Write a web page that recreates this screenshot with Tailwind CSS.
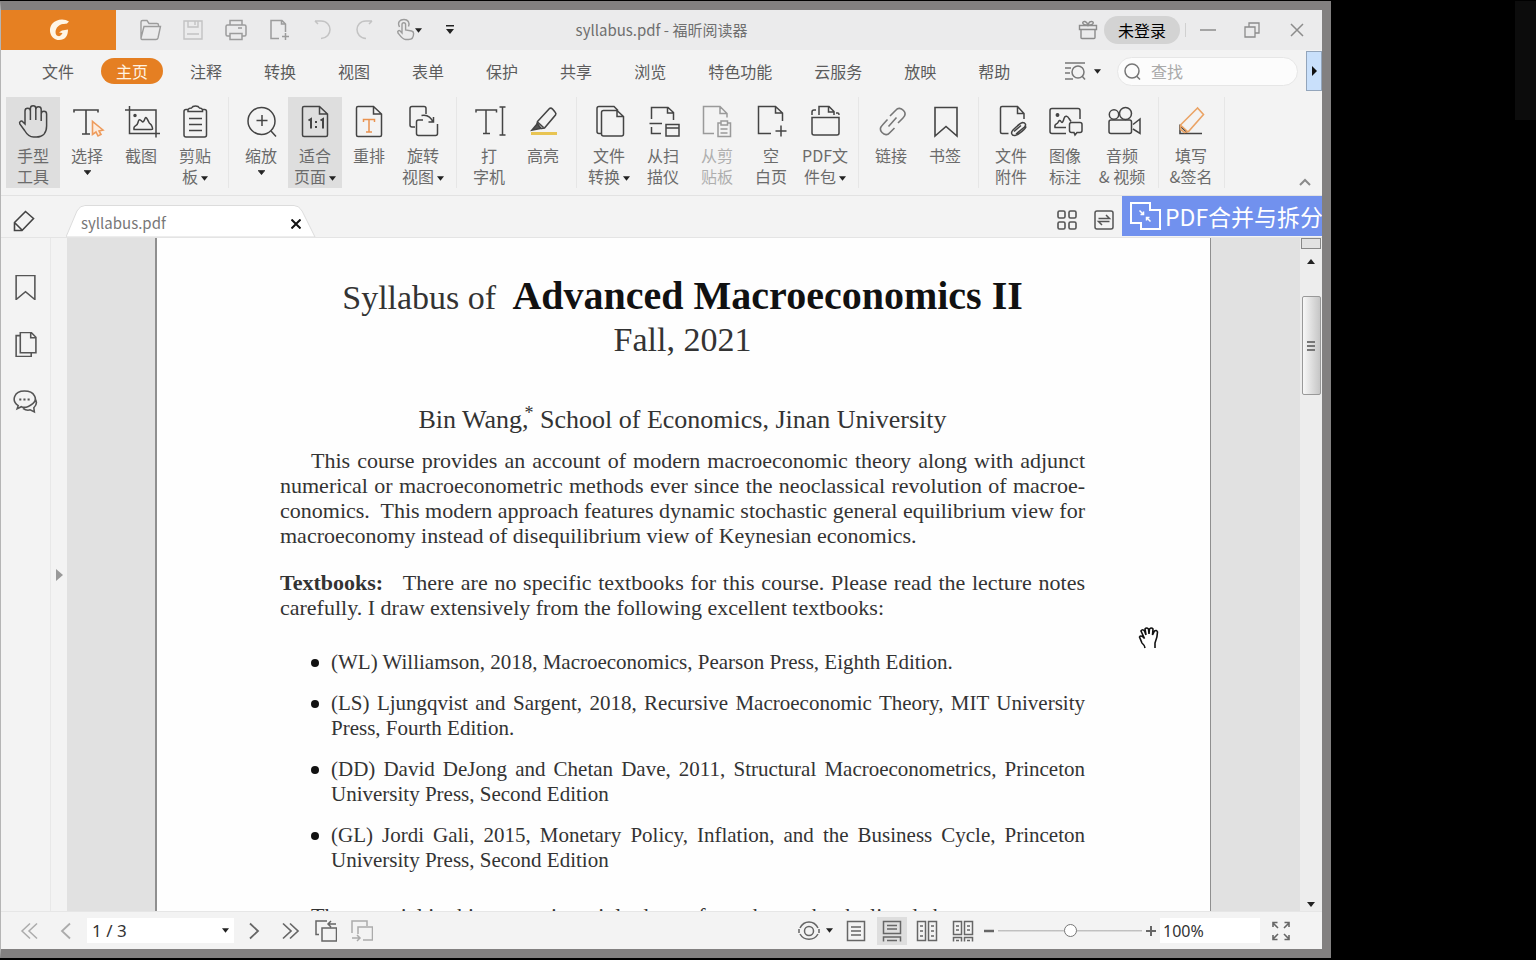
<!DOCTYPE html>
<html lang="zh-CN">
<head>
<meta charset="utf-8">
<title>syllabus.pdf - 福昕阅读器</title>
<script src="https://cdn.jsdelivr.net/npm/@tailwindcss/browser@4"></script>
</head>
<body class="flex h-screen overflow-hidden bg-black pt-px pb-[2px] font-['Noto_Sans_CJK_SC',sans-serif] text-base text-[#5c5c5c]">
<svg class="hidden">
  <symbol id="caret" viewBox="0 0 8 5"><path d="M0 0h8L4 5z" fill="#222"/></symbol>
</svg>

<div class="flex min-w-0 flex-1 flex-col border-t-[9px] border-r-[9px] border-b-[9px] border-l border-[#828080] border-l-[#b5b5b5] bg-[#f3f3f3]">

  <!-- Title bar -->
  <header class="grid h-10 shrink-0 grid-cols-[1fr_auto_1fr] items-center bg-[#ebebec]">
    <div class="flex h-10 items-center">
      <button aria-label="福昕" class="flex h-10 w-[115px] items-center justify-center bg-[#e68022]">
        <svg class="size-6" viewBox="0 0 24 24"><path d="M22 3.500C17 0 9 1 5 6c-4.500 6-1 16 7 16 6 0 9-4 9-10.500l-6 1-3 2 3.500.5c-1 2.500-3 3.500-4.500 3-3.500-1-3-7 0-9.500C14 5.500 18 6 20 5.500z" fill="#fff6e6"/></svg>
      </button>
      <div class="ml-3 flex items-center [&>button]:flex [&>button]:h-8 [&>button]:w-[43px] [&>button]:items-center [&>button]:justify-center [&_svg]:size-6 [&_svg]:shrink-0 [&_svg]:fill-none [&_svg]:stroke-[#9c9c9c]">
        <button aria-label="打开"><svg viewBox="0 0 24 24" stroke-width="1.4"><path d="M3 20V4q0-1.500 1.500-1.500H9l2 3h8q1.500 0 1.500 1.500v1.500M3 20l3-11.500h16.500L20 20q-.5 1.500-2 1.500H4q-1 0-1-1.500z"/></svg></button>
        <button aria-label="保存" class="opacity-50"><svg viewBox="0 0 24 24" stroke-width="1.4"><path d="M3 3h18v18H3zM7 3v6h10V3M14 3v4M6 16h12"/></svg></button>
        <button aria-label="打印"><svg viewBox="0 0 24 24" stroke-width="1.5"><path d="M6 7V2.500h12V7M6 18H3.500q-1.500 0-1.500-1.500v-8Q2 7 3.500 7h17Q22 7 22 8.500v8q0 1.500-1.500 1.500H18M6 15.500h12v6H6zM14 10h4"/></svg></button>
        <button aria-label="新建"><svg viewBox="0 0 24 24" stroke-width="1.5"><path d="M12 20.500H4v-18h11l3.500 3.500v8M14.500 2.500V6h4M18.500 15v7M15 18.500h7"/></svg></button>
        <button aria-label="撤销" class="opacity-50"><svg viewBox="0 0 24 24" stroke-width="1.5"><path d="M5 3h6c12 0 12 17 0 17.500M5 3l3 3"/></svg></button>
        <button aria-label="重做" class="opacity-50"><svg viewBox="0 0 24 24" stroke-width="1.5"><path d="M19 3h-6C1 3 1 20 13 20.500M19 3l-3 3"/></svg></button>
        <button aria-label="触摸模式"><svg viewBox="0 0 24 24" stroke-width="1.4"><path d="M6 15V6.500a1.800 1.800 0 0 1 3.600 0V12l6 1q2 .5 2 2.500c0 4-1.500 6-5 6h-3c-3 0-5-3-7.600-6.500-1-2 1-3 2.200-2zM3.500 9C1 4 4 1.500 8 1.500s6 3 4.500 7"/></svg></button>
      </div>
      <svg class="-ml-[14px] h-[5px] w-[7px]"><use href="#caret"/></svg>
      <button aria-label="自定义快速访问" class="ml-6"><svg class="h-[10px] w-2" viewBox="0 0 8 10"><path d="M0 0h8v1.500H0zM0 4h8L4 9z" fill="#222"/></svg></button>
    </div>
    <h1 class="text-[15px] text-[#6f6f6f]">syllabus.pdf - 福昕阅读器</h1>
    <div class="flex items-center justify-end pr-4 [&_svg]:fill-none [&_svg]:stroke-[#8c8c8c]">
      <button aria-label="礼物"><svg class="size-5" viewBox="0 0 20 20" stroke-width="1.4"><path d="M1.500 5.500h17v4h-17zM3 9.500h14v8q0 1-1 1H4q-1 0-1-1zM10 5C3 5 4 1 7 1.500q2 .5 3 3.500c1-3 2-3.500 3-3.500 3-.5 4 3.500-3 3.500z"/></svg></button>
      <button class="ml-[6px] h-7 rounded-full bg-[#d3d3d3] px-[14px] text-black">未登录</button>
      <span class="ml-[5px] h-[14px] w-px bg-[#d0d0d0]"></span>
      <button aria-label="最小化" class="ml-[14px]"><svg class="size-4" viewBox="0 0 16 16"><path d="M0 8h16" stroke-width="1.5"/></svg></button>
      <button aria-label="还原" class="ml-7"><svg class="size-4" viewBox="0 0 16 16" stroke-width="1.3"><path d="M1 5h10v10H1zM5 5V1h10v10h-4"/></svg></button>
      <button aria-label="关闭" class="ml-7"><svg class="size-[18px]" viewBox="0 0 18 18" stroke-width="1.5"><path d="M3 3l12 12M15 3L3 15"/></svg></button>
    </div>
  </header>

  <!-- Menu -->
  <nav class="flex h-[42px] shrink-0 items-center pl-[26px]">
    <div class="flex gap-3 [&>button]:h-[26px] [&>button]:rounded-full [&>button]:px-[15px] [&>button]:whitespace-nowrap [&>button]:leading-[26px]">
      <button>文件</button><button class="bg-[#e57f22] text-[#fff3e2]">主页</button><button>注释</button><button>转换</button><button>视图</button><button>表单</button><button>保护</button><button>共享</button><button>浏览</button><button>特色功能</button><button>云服务</button><button>放映</button><button>帮助</button>
    </div>
    <div class="ml-auto flex items-center">
      <button aria-label="搜索选项" class="flex items-center gap-2"><svg class="h-5 w-[22px] fill-none stroke-[#777]" viewBox="0 0 22 20" stroke-width="1.5"><path d="M1 2h20M1 7h6M1 12h5M1 18h8"/><circle cx="14" cy="11" r="6"/><path d="M18 15l3 3.500"/></svg><svg class="h-[5px] w-[7px]"><use href="#caret"/></svg></button>
      <label class="ml-4 flex h-[29px] w-[181px] items-center gap-[10px] rounded-full border border-[#e6e6e6] bg-[#fcfcfc] pl-[6px]">
        <svg class="size-[17px] shrink-0 fill-none stroke-[#777]" viewBox="0 0 17 17" stroke-width="1.5"><circle cx="8" cy="8" r="7"/><path d="M12.500 13l3.500 3.500"/></svg>
        <input aria-label="查找" placeholder="查找" class="w-full min-w-0 bg-transparent outline-none placeholder:text-[#aaa]">
      </label>
      <button aria-label="展开" class="ml-2 flex h-10 w-4 items-center justify-center border border-[#93a5bb] bg-[#c9e0fb]"><svg class="h-[10px] w-[5px]" viewBox="0 0 5 10"><path d="M0 0l5 5-5 5z" fill="#111"/></svg></button>
    </div>
  </nav>

  <!-- Ribbon -->
  <section class="flex h-[104px] shrink-0 items-start border-b border-[#e2e2e2] pt-[5px] leading-[21px] text-[#6b6b6b] [&_button]:flex [&_button]:h-[91px] [&_button]:w-[54px] [&_button]:shrink-0 [&_button]:flex-col [&_button]:items-center [&_button]:pt-[9px] [&_button>svg]:size-8 [&_button>svg]:shrink-0 [&_button>svg]:overflow-visible [&_button>svg]:fill-none [&_button>svg]:stroke-[#444] [&_span]:mt-[7px] [&_span]:whitespace-nowrap [&_i]:inline-flex [&_i]:pl-[3px] [&_i]:align-middle [&_i>svg]:h-[5px] [&_i>svg]:w-[7px] [&>div]:flex [&>div]:h-[91px] [&>div]:border-r [&>div]:border-[#e6e6e6] [&>div]:pl-[5px] [&>div]:pr-[6px]">
    <div>
      <button class="bg-[#dedede]"><svg viewBox="0 0 32 32" stroke-width="1.5"><path d="M8 18V5a2.700 2.700 0 0 1 5.400 0v9V2.500a2.700 2.700 0 0 1 5.400 0V14 3.500a2.700 2.700 0 0 1 5.400 0V15 8a2.700 2.700 0 0 1 5.400 0v12c0 7-4 11-10 11h-3c-5 0-7-3-9-6.500L2.800 18c-1-2.500 1.500-4 3.200-2z"/></svg><span>手型<br>工具</span></button>
      <button><svg viewBox="0 0 32 32" stroke-width="1.6"><path d="M3 6.500V4h24v2.500M15 4v24M11 28h8"/><path d="M21.500 15.500v13l3.500-2.500 2 4 3-1.500-2-3.500 4-1z" stroke="#ee9b5c" fill="#fdebdc"/></svg><span>选择</span><svg class="mt-1 !h-[5px] !w-[7px]"><use href="#caret"/></svg></button>
      <button><svg viewBox="0 0 32 32" stroke-width="1.5"><path d="M0 4h31v27.500M4.500 0v27.500H35M9 23.500c-1-5 3-2 4-7s3-2 4-1 2 0 3-3 3 2 4 4 2 1 3 4 1 3-1 3z"/><circle cx="10" cy="9.500" r="1" fill="#444"/></svg><span>截图</span></button>
      <button><svg viewBox="0 0 32 32" stroke-width="1.5"><path d="M9 3.500H7q-2 0-2 2V29q0 2 2 2h18.500q2 0 2-2V5.500q0-2-2-2h-2M9 5.500h14.500V3.500q-1-1.500-3-1.500Q19.500 0 16.500 0T12.500 2q-2.500 0-3.500 1.500zM10 12.500h13M10 18.500h13M10 24.500h13"/></svg><span>剪贴<br>板<i><svg><use href="#caret"/></svg></i></span></button>
    </div>
    <div>
      <button><svg viewBox="0 0 32 32" stroke-width="1.5"><circle cx="16.500" cy="15" r="13.500"/><path d="M11.500 14.500h11M17 9v11M26 25l5 5.500"/></svg><span>缩放</span><svg class="mt-1 !h-[5px] !w-[7px]"><use href="#caret"/></svg></button>
      <button class="bg-[#dedede]"><svg viewBox="0 0 32 32" stroke-width="1.5"><path d="M20.500.5H5q-1.500 0-1.500 1.500v27q0 1.500 1.500 1.500h22q1.500 0 1.500-1.500V8zM20.500.5V8h8"/><path d="M9.500 14.500l2.500-1.500v9.500M21.500 14.500L24 13v9.500" stroke-width="2"/><path d="M17 15v2M17 20v2" stroke-width="2"/></svg><span>适合<br>页面<i><svg><use href="#caret"/></svg></i></span></button>
      <button><svg viewBox="0 0 32 32" stroke-width="1.5"><path d="M20.500.5H5q-1.500 0-1.500 1.500v27q0 1.500 1.500 1.500h22q1.500 0 1.500-1.500V8zM20.500.5V8h8"/><path d="M10.500 16v-2.500h11V16M16 13.500V26M13 26h6" stroke="#ea9350"/></svg><span>重排</span></button>
      <button><svg viewBox="0 0 32 32" stroke-width="1.5"><path d="M8 21H5q-2 0-2-2V2.500q0-2 2-2h12q2 0 2 2V8M16 14h-4.500q-2 0-2 2v11.500q0 2 2 2h17q2 0 2-2V18M14.500 9.500Q23 8 26 16.500M21.500 16h5v-5"/></svg><span>旋转<br>视图<i><svg><use href="#caret"/></svg></i></span></button>
    </div>
    <div>
      <button><svg viewBox="0 0 32 32" stroke-width="1.5"><path d="M3 6.500V4h20.500v2.500M13 4v23.500M10 27.500h7M29.500 1v28M26.500 1h6M26.500 29h6"/></svg><span class="text-center">打<br>字机</span></button>
      <button><svg viewBox="0 0 32 32" stroke-width="1.6"><path d="M22.500 2.500l-12 13-.5 3 4.500 4 3-.5 11-13q1-1.500-.5-3l-2.500-3q-1.500-1.500-3-.5zM10.500 16l6 5.500"/><path d="M10.500 17.500L5 24l8.500-1.500z" fill="#555"/><path d="M4 27.500h26" stroke="#e8c452" stroke-width="3"/></svg><span>高亮</span></button>
    </div>
    <div>
      <button><svg viewBox="0 0 32 32" stroke-width="1.5"><path d="M8 27.500H6q-2 0-2-2v-23q0-2 2-2h15l4 4M24 4.500H10.500q-2 0-2 2V28q0 2 2 2h18q2 0 2-2V10.500zM24 4.500v6h6.500"/></svg><span>文件<br>转换<i><svg><use href="#caret"/></svg></i></span></button>
      <button><svg viewBox="0 0 32 32" stroke-width="1.5"><path d="M4.500 13V1.500H21l5.500 5V14M20.500 1.500v5.500h6M2.500 17.500H15M4.500 21v6.500H14M19 18.500h13V30H19zM19 22h13"/></svg><span>从扫<br>描仪</span></button>
      <button disabled class="opacity-50"><svg viewBox="0 0 32 32" stroke-width="1.5"><path d="M13 27.500H2.500V.5H19l7 7v4M19 .5v7h7M20 17h-3v13.500h12.500V17h-3M20 15h6.500v4H20zM19.500 23h7M19.500 27h7"/></svg><span>从剪<br>贴板</span></button>
      <button><svg viewBox="0 0 32 32" stroke-width="1.5"><path d="M16 27.500H3.500V.5h17l7 6.500v8M20.500.5V7h7M26 19.500v11M20.500 25h11"/></svg><span class="text-center">空<br>白页</span></button>
      <button><svg viewBox="0 0 32 32" stroke-width="1.5"><path d="M3 11.500h27V27q0 2-2 2H5q-2 0-2-2zM3 9V6q0-2 2-2h2M10 9V.5h10l5 5V9M19.500.5V6h5.500M27 7h2q1 0 1 2"/></svg><span>PDF文<br>件包<i><svg><use href="#caret"/></svg></i></span></button>
    </div>
    <div>
      <button><svg viewBox="0 0 32 32" stroke-width="1.6" class="!stroke-[#777]"><path d="M15 10l6-6c2-2.500 5-2 7.500.5s2 5-.5 7.500l-5 5M19.500 22l-5 5c-2 2.500-5 2-7.500-.5s-2-5 .5-7.500l5-5.500M13.500 20.500l8-9"/></svg><span>链接</span></button>
      <button><svg viewBox="0 0 32 32" stroke-width="1.6"><path d="M6 1.500h22V30l-11-9.500L6 30z"/></svg><span>书签</span></button>
    </div>
    <div>
      <button><svg viewBox="0 0 32 32" stroke-width="1.5"><path d="M13.500 27.500H7q-1.500 0-1.500-1.500V2Q5.500.5 7 .5h15.500l6.500 7V13M22.500.5v7H29"/><path d="M21 28l8.500-7c2-2 1-4.500-2-4.500-2.500.5-6 4-9.500 7.500-2.500 2.500-1.500 6 2 5.500 4-1 11-7 11-9M19 25.500l7-6"/></svg><span>文件<br>附件</span></button>
      <button><svg viewBox="0 0 32 32" stroke-width="1.5"><path d="M17 27.500H3q-2 0-2-2v-21q0-2 2-2h26q2 0 2 2V13M17 21.500H6c-1-4 2-3 3-5s2-3 3-1 2 1 3-3 4-2 5 0l2 3M22.500 16.500H31q2 0 2 2v6q0 2-2 2h-3L26 29l-1-2.500h-2.500q-2 0-2-2v-6q0-2 2-2z"/><circle cx="8.500" cy="9" r="1.200" fill="#444"/></svg><span>图像<br>标注</span></button>
      <button class="!w-[60px]"><svg viewBox="0 0 32 32" stroke-width="1.5"><circle cx="8" cy="8.500" r="4.700"/><circle cx="19.500" cy="7.500" r="6"/><path d="M5 14h18.500q2 0 2 2v9.500q0 2-2 2H5q-2 0-2-2V16q0-2 2-2zM27 18.500l7-5.500v14.500L27 23"/></svg><span class="text-center">音频<br>&amp; 视频</span></button>
    </div>
    <div>
      <button><svg viewBox="0 0 32 32" stroke-width="1.6"><path d="M5 18.500v9h22M5 20l7 6.500"/><path d="M22.500 2L5.500 19l0 4.500 4 3 4-1L28.500 8.500zM6 19.500l6.500 6" stroke="#eaa365"/></svg><span>填写<br>&amp;签名</span></button>
    </div>
    <a href="#" aria-label="折叠功能区" class="mt-auto mr-[11px] mb-[9px] ml-auto"><svg class="h-2 w-3" viewBox="0 0 12 8" fill="none" stroke="#8a8a8a" stroke-width="2"><path d="M1 7l5-5 5 5"/></svg></a>
  </section>

  <!-- Document tabs -->
  <div class="flex h-[41px] shrink-0 items-end overflow-hidden">
    <button aria-label="编辑" class="mb-[5px] ml-3"><svg class="size-[22px]" viewBox="0 0 22 22" fill="none" stroke="#444" stroke-width="1.6"><path d="M12.500 1.500l8 7L9 20.500H1.500V12.500zM2 13l7 7"/></svg></button>
    <div class="relative ml-[31px] flex h-8 w-[252px] items-center justify-between pr-[17px] pl-[15px]">
      <svg class="absolute inset-0 h-full w-full" viewBox="0 0 253 32" preserveAspectRatio="none"><path d="M0 32L11 6q3-5.500 8-5.500h210q5 0 8 5.500l13 26z" fill="#fff" stroke="#dcdcdc"/></svg>
      <a href="#" class="relative pt-1 text-[15px] text-[#777]">syllabus.pdf</a>
      <button aria-label="关闭标签" class="relative pt-[6px]"><svg class="size-[10px]" viewBox="0 0 10 10" stroke="#111" stroke-width="2"><path d="M.5.5l9 9M9.500.5l-9 9"/></svg></button>
    </div>
    <div class="ml-auto flex items-start self-start">
      <button aria-label="缩略图" class="mt-[14px]"><svg class="size-5" viewBox="0 0 20 20" fill="none" stroke="#555" stroke-width="1.6"><rect x="1" y="1" width="7" height="7" rx="1.5"/><rect x="12" y="1" width="7" height="7" rx="1.5"/><rect x="1" y="12" width="7" height="7" rx="1.5"/><rect x="12" y="12" width="7" height="7" rx="1.5"/></svg></button>
      <button aria-label="切换" class="mt-[14px] ml-[17px]"><svg class="size-5" viewBox="0 0 20 20" fill="none" stroke="#555" stroke-width="1.5"><rect x="1" y="1" width="18" height="18" rx="2"/><path d="M4.500 8.500h11L12 5M15.500 11.500h-11L8 15"/></svg></button>
      <a href="#" class="ml-2 flex h-10 w-[200px] items-center gap-1 overflow-hidden bg-[#7191ee] pl-2 text-[23px] whitespace-nowrap text-white">
        <svg class="h-7 w-[31px] shrink-0" viewBox="0 0 31 28" fill="none" stroke="#fff" stroke-width="2"><path d="M1 1h19v7h10v19H11v-6H1z"/><path d="M9.500 8.500l4 4M13.500 9.500v3h-3M20.500 19.500l-4-4M16.500 18.500v-3h3" stroke-width="1.5"/></svg>
        PDF合并与拆分</a>
    </div>
  </div>

  <!-- Workspace -->
  <main class="flex min-h-0 flex-1 border-t border-[#e4e4e4]">
    <aside class="flex w-[50px] shrink-0 flex-col items-center gap-[32px] border-r border-[#e8e8e8] pt-[37px] [&_svg]:size-[25px] [&_svg]:fill-none [&_svg]:stroke-[#555]">
      <button aria-label="书签"><svg viewBox="0 0 24 24" stroke-width="1.5"><path d="M3 .5h18V23.500L12 16l-9 7.500z"/></svg></button>
      <button aria-label="页面"><svg viewBox="0 0 24 24" stroke-width="1.5"><path d="M7 3.500H3V23.500h14.500V20M7 .5h10.500L22 5v15H7zM17 .5V5.500h5"/></svg></button>
      <button aria-label="注释"><svg viewBox="0 0 24 24" stroke-width="1.5"><path d="M5 16c-7-5-4-14 6-14s13 8 8 12-9 4-11 3l-4 2zM21 9c3 4 1 7-1 9l.5 4-4-2c-3 1-5 0-7-1.500"/><path d="M6 10h2M10 10h2M14 10h2" stroke-width="2"/></svg></button>
    </aside>
    <div class="flex w-4 shrink-0 items-center justify-center"><button aria-label="展开导航面板"><svg class="h-3 w-[7px]" viewBox="0 0 7 12"><path d="M0 0l7 6-7 6z" fill="#999"/></svg></button></div>
    <div class="min-w-0 flex-1 overflow-hidden bg-[#e1e1e1] pr-[89px] pl-[88px]">
      <article class="min-h-full border-r border-l-2 border-[#8f8f8f] bg-[#fefefe] pt-[37px] pr-[125px] pl-[123px] font-['Liberation_Serif',serif] text-[22px] leading-[25px] text-[#333]">
        <h2 class="text-center text-[34px] leading-[42px] whitespace-nowrap">Syllabus of&nbsp;<b class="text-[40px] text-[#111]"> Advanced Macroeconomics II</b><br>Fall, 2021</h2>
        <p class="mt-[43px] text-center text-[26px] leading-8">Bin Wang,<sup class="-ml-1 text-[18px] leading-none">*</sup> School of Economics, Jinan University</p>
        <p class="mt-[12px] [&>span]:block [&>span]:whitespace-nowrap [&>span]:[text-align-last:justify]">
          <span class="pl-[31px]">This course provides an account of modern macroeconomic theory along with adjunct</span>
          <span>numerical or macroeconometric methods ever since the neoclassical revolution of macroe-</span>
          <span>conomics.&nbsp; This modern approach features dynamic stochastic general equilibrium view for</span>
          macroeconomy instead of disequilibrium view of Keynesian economics.
        </p>
        <p class="mt-[22px] [&>span]:block [&>span]:whitespace-nowrap [&>span]:[text-align-last:justify]">
          <span><b>Textbooks:</b>&nbsp;&nbsp; There are no specific textbooks for this course. Please read the lecture notes</span>
          carefully. I draw extensively from the following excellent textbooks:
        </p>
        <ul class="mt-[30px] flex flex-col gap-4 text-[21px] [&>li]:flex [&>li]:pl-[31px] [&>li>svg]:mt-[9px] [&>li>svg]:mr-3 [&>li>svg]:size-2 [&>li>svg]:shrink-0 [&_div]:flex-1 [&_span]:block [&_span]:whitespace-nowrap [&_span]:[text-align-last:justify]">
          <li><svg viewBox="0 0 8 8"><circle cx="4" cy="4" r="4" fill="#111"/></svg><div>(WL) Williamson, 2018, Macroeconomics, Pearson Press, Eighth Edition.</div></li>
          <li><svg viewBox="0 0 8 8"><circle cx="4" cy="4" r="4" fill="#111"/></svg><div><span>(LS) Ljungqvist and Sargent, 2018, Recursive Macroeconomic Theory, MIT University</span>Press, Fourth Edition.</div></li>
          <li><svg viewBox="0 0 8 8"><circle cx="4" cy="4" r="4" fill="#111"/></svg><div><span>(DD) David DeJong and Chetan Dave, 2011, Structural Macroeconometrics, Princeton</span>University Press, Second Edition</div></li>
          <li><svg viewBox="0 0 8 8"><circle cx="4" cy="4" r="4" fill="#111"/></svg><div><span>(GL) Jordi Gali, 2015, Monetary Policy, Inflation, and the Business Cycle, Princeton</span>University Press, Second Edition</div></li>
        </ul>
        <p class="mt-[30px] pl-[31px] whitespace-nowrap">The material in this course is mainly drawn from the textbooks listed above.</p>
      </article>
    </div>
    <!-- Scrollbar -->
    <div class="flex w-[22px] shrink-0 flex-col items-center bg-[#ededed]">
      <div class="h-[11px] w-5 shrink-0 border border-[#888] bg-[#e2e2e2]"></div>
      <button aria-label="向上滚动" class="flex h-[25px] shrink-0 items-center"><svg class="h-[5px] w-2 rotate-180"><use href="#caret"/></svg></button>
      <div class="mt-[22px] flex h-[99px] w-[19px] shrink-0 flex-col items-center justify-center gap-[2px] rounded-xs border border-[#999] bg-linear-to-r from-[#f8f8f8] to-[#c6c6c6]">
        <i class="h-[2px] w-2 bg-[#777]"></i><i class="h-[2px] w-2 bg-[#777]"></i><i class="h-[2px] w-2 bg-[#777]"></i>
      </div>
      <button aria-label="向下滚动" class="mt-auto mb-1"><svg class="h-[5px] w-2"><use href="#caret"/></svg></button>
    </div>
  </main>

  <!-- Status bar -->
  <footer class="flex h-[38px] shrink-0 items-center border-t border-[#e6e6e6] pr-[30px] pl-[18px] text-[17px] text-[#333] [&>button]:shrink-0 [&>button>svg]:size-[22px] [&>button>svg]:fill-none [&>button>svg]:stroke-[#666]">
    <button aria-label="第一页" class="opacity-50"><svg viewBox="0 0 22 22" stroke-width="1.5"><path d="M11 3.500L3 11l8 7.500M18 3.500L10 11l8 7.500"/></svg></button>
    <button aria-label="上一页" class="ml-[14px] opacity-50"><svg viewBox="0 0 22 22" stroke-width="1.8"><path d="M15 3.500L7 11l8 7.500"/></svg></button>
    <div class="relative ml-[10px] flex items-center">
      <select aria-label="页码" class="h-[25px] w-[147px] appearance-none bg-white pl-[5px] font-['Noto_Sans',sans-serif] leading-[25px]"><option>1 / 3</option></select>
      <svg class="pointer-events-none absolute right-[5px] h-[5px] w-[7px]"><use href="#caret"/></svg>
    </div>
    <button aria-label="下一页" class="ml-[9px]"><svg viewBox="0 0 22 22" stroke-width="1.8"><path d="M7 3.500l8 7.500-8 7.500"/></svg></button>
    <button aria-label="最后一页" class="ml-[14px]"><svg viewBox="0 0 22 22" stroke-width="1.7"><path d="M4 3.500l8 7.500-8 7.500M11 3.500l8 7.500-8 7.500"/></svg></button>
    <button aria-label="上一视图" class="ml-[14px]"><svg viewBox="0 0 22 22" stroke-width="1.5"><path d="M4 14.500H1V1h11M7 8h14.500v13H7zM21 4h-8M16 1l-3 3 3 3"/></svg></button>
    <button aria-label="下一视图" class="ml-[14px] opacity-50"><svg viewBox="0 0 22 22" stroke-width="1.5"><path d="M1 13V1h15v5M12 20h9.500V7H7v7M1 18h8M6 15l3 3-3 3"/></svg></button>

    <button aria-label="阅读模式" class="ml-auto"><svg viewBox="0 0 22 22" stroke-width="1.5"><circle cx="11" cy="11" r="4.500"/><path d="M2 8c4-8 14-8 18 0M2 14c4 7 14 7 18 0M1 9v4M21 9v4"/></svg></button>
    <svg class="ml-[6px] h-[5px] w-[7px] shrink-0"><use href="#caret"/></svg>
    <button aria-label="单页" class="ml-[12px]"><svg viewBox="0 0 22 22" stroke-width="1.5"><path d="M2.500 1.500h17v19h-17zM6 7h10M6 11h10M6 15h10"/></svg></button>
    <button aria-label="连续" class="ml-[10px] flex h-7 w-[30px] items-center justify-center bg-[#dedede]"><svg viewBox="0 0 22 22" stroke-width="1.5"><path d="M2.500 1.500h17v12h-17zM6 5.500h10M6 9h10M2.500 21.500v-4.500h17v4.500M6 20.500h10"/></svg></button>
    <button aria-label="双页" class="ml-[9px]"><svg viewBox="0 0 22 22" stroke-width="1.5"><path d="M1.500 1.500h8v19h-8zM12.500 1.500h8v19h-8zM4 6h3M4 11h3M4 16h3M15 6h3M15 11h3M15 16h3"/></svg></button>
    <button aria-label="双页连续" class="ml-[14px]"><svg viewBox="0 0 22 22" stroke-width="1.5"><path d="M1.500 1.500h8v13h-8zM12.500 1.500h8v13h-8zM4 6h3M4 10h3M15 6h3M15 10h3M1.500 21.500v-4h8v4M12.500 21.500v-4h8v4M4 20.500h3M15 20.500h3"/></svg></button>
    <button aria-label="缩小" class="ml-[10px]"><svg class="!h-[10px] !w-[10px]" viewBox="0 0 10 10" stroke-width="2.5"><path d="M0 5h10"/></svg></button>
    <input type="range" aria-label="缩放" min="0" max="100" value="50" class="mx-1 h-[14px] w-[144px] appearance-none bg-linear-to-b from-transparent from-40% via-[#a8a8a8] via-40% to-transparent to-60% [&::-webkit-slider-thumb]:size-[13px] [&::-webkit-slider-thumb]:appearance-none [&::-webkit-slider-thumb]:rounded-full [&::-webkit-slider-thumb]:border [&::-webkit-slider-thumb]:border-[#777] [&::-webkit-slider-thumb]:bg-white">
    <button aria-label="放大"><svg class="!h-[10px] !w-[10px]" viewBox="0 0 10 10" stroke-width="2"><path d="M0 5h10M5 0v10"/></svg></button>
    <input aria-label="缩放比例" value="100%" class="ml-1 h-[25px] w-[100px] bg-white pl-[3px] font-['Noto_Sans',sans-serif] text-base">
    <button aria-label="全屏" class="ml-[10px]"><svg viewBox="0 0 22 22" stroke-width="1.6"><path d="M8 8L3 3M3 7V2.500h4.500M14 8l5-5M14.500 2.500H19V7M8 14l-5 5M3 15v4.500h4.500M14 14l5 5M14.500 19.500H19V15"/></svg></button>
  </footer>
</div>

<div class="flex w-[205px] shrink-0 justify-end"><div class="h-[119px] w-[21px] bg-[#0c0c0c]"></div></div>

<!-- Hand pointer over the page -->
<svg class="absolute top-[626px] left-[1138px] h-6 w-[22px]" viewBox="0 0 22 24" fill="#fff" stroke="#111" stroke-width="1.6"><path d="M7 22q-.5-3-3-5L1.500 11q1-2 3.500 0L6.500 12.500 3 5q1.500-2.500 3.500 0L8 9 7 3q1.500-2 3.500 0l.5 5 .5-5q2-2 3.500 0l-.5 6 2-4q2-1.500 3 1 0 5-2.500 11l0 5"/></svg>
</body>
</html>
